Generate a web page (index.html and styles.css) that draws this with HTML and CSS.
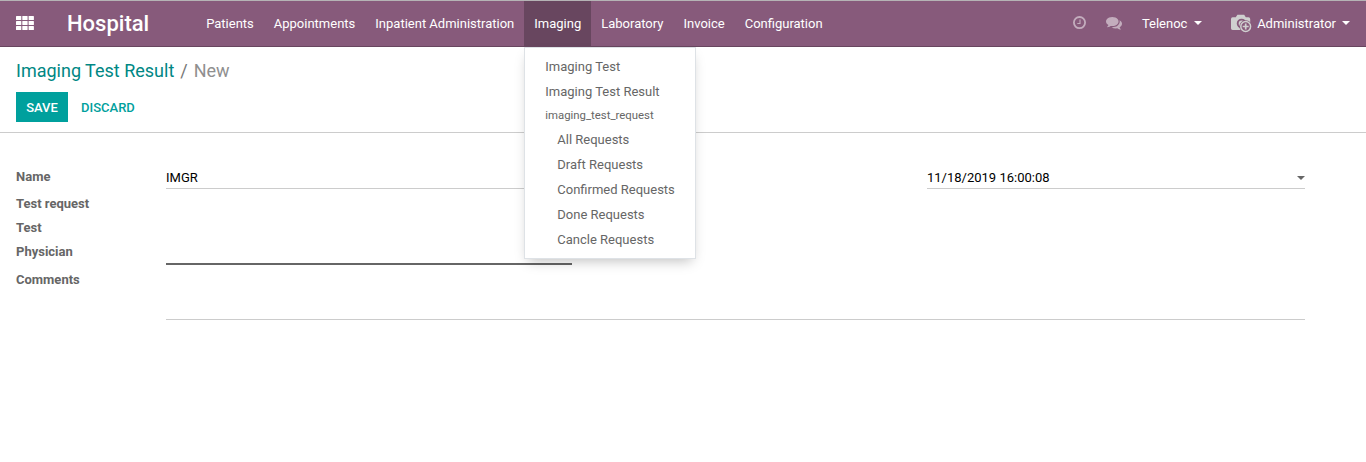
FILE: index.html
```html
<!DOCTYPE html>
<html lang="en">
<head>
<meta charset="utf-8">
<title>Imaging Test Result - Hospital</title>
<link rel="stylesheet" href="styles.css">
</head>
<body>
<header class="navbar">
  <a class="apps" aria-label="Applications">
    <svg width="18" height="14" viewBox="0 0 18 14" fill="#fff">
      <rect x="0" y="0" width="5.300" height="4" rx=".6"/><rect x="6.300" y="0" width="5.300" height="4" rx=".6"/><rect x="12.600" y="0" width="5.300" height="4" rx=".6"/>
      <rect x="0" y="5" width="5.300" height="4" rx=".6"/><rect x="6.300" y="5" width="5.300" height="4" rx=".6"/><rect x="12.600" y="5" width="5.300" height="4" rx=".6"/>
      <rect x="0" y="10" width="5.300" height="4" rx=".6"/><rect x="6.300" y="10" width="5.300" height="4" rx=".6"/><rect x="12.600" y="10" width="5.300" height="4" rx=".6"/>
    </svg>
  </a>
  <a class="brand">Hospital</a>
  <nav class="menu">
    <a class="menu-link">Patients</a>
    <a class="menu-link">Appointments</a>
    <a class="menu-link">Inpatient Administration</a>
    <div class="menu-open">
      <a class="menu-link active">Imaging</a>
      <div class="dropdown">
        <a class="item">Imaging Test</a>
        <a class="item">Imaging Test Result</a>
        <div class="group-title">imaging_test_request</div>
        <a class="item nested">All Requests</a>
        <a class="item nested">Draft Requests</a>
        <a class="item nested">Confirmed Requests</a>
        <a class="item nested">Done Requests</a>
        <a class="item nested">Cancle Requests</a>
      </div>
    </div>
    <a class="menu-link">Laboratory</a>
    <a class="menu-link">Invoice</a>
    <a class="menu-link">Configuration</a>
  </nav>
  <div class="systray">
    <svg class="clock" width="14" height="14" viewBox="0 0 14 14" fill="none" stroke="#c3adbd">
      <circle cx="6.500" cy="6.600" r="5.600" stroke-width="1.800"/><path d="M7 3.500v4H4.300" stroke-width="1.100"/>
    </svg>
    <svg class="chat" width="16" height="14" viewBox="0 0 1792 1568" fill="#c3adbd">
      <path d="M1408 640q0 139-94 257t-256.500 186.500T704 1152q-86 0-176-16-124 88-278 128-36 9-86 16h-3q-11 0-20.500-8t-11.500-21q-1-3-1-6.500t.5-6.500 2-6l2.500-5 3.500-5.500 4-5 4.500-5 4-4.500q5-6 23-25t26-29.500 22.500-29 25-38.500 20.500-44q-124-72-195-177T0 640q0-139 94-257t256.500-186.500T704 128t353.500 68.500T1314 383t94 257zm384 256q0 120-71 224.500T1526 1298q10 24 20.500 44t25 38.500 22.500 29 26 29.500 23 25q1 1 4 4.500t4.500 5 4 5 3.500 5.500l2.500 5 2 6 .5 6.500-1 6.500q-3 14-13 22t-22 7q-50-7-86-16-154-40-278-128-90 16-176 16-271 0-472-132 58 4 88 4 161 0 309-45t264-129q125-92 192-212t67-254q0-77-23-152 129 71 204 178t75 230z" transform="translate(0 -20)"/>
    </svg>
    <a class="company">Telenoc <i class="caret"></i></a>
    <a class="user">
      <svg width="22" height="19" viewBox="0 0 22 19">
        <path fill="#cfcfcf" d="M2.600 3.200h3.200L7.400.8h6.800l1.600 2.400h2.700q1.700 0 1.700 1.700V16H2.600Q1 16 1 14.300V4.900Q1 3.200 2.600 3.200Z"/>
        <circle cx="11.600" cy="9.500" r="3.900" fill="none" stroke="#875a7b" stroke-width="1.900"/>
        <circle cx="15.700" cy="12.500" r="6.300" fill="#875a7b"/>
        <circle cx="15.700" cy="12.500" r="4.900" fill="#875a7b" stroke="#cfcfcf" stroke-width="1.500"/>
        <path d="M12.700 12.500h6M15.700 9.500v6" stroke="#cfcfcf" stroke-width="1.700"/>
      </svg>
      Administrator <i class="caret"></i>
    </a>
  </div>
</header>
<section class="control-panel">
  <div class="breadcrumb"><a>Imaging Test Result</a><span class="slash">/</span><span class="current">New</span></div>
  <div class="buttons"><button class="btn primary">SAVE</button><button class="btn link">DISCARD</button></div>
</section>
<main class="form">
  <label class="l-name">Name</label>
  <div class="field name">IMGR</div>
  <div class="field date">11/18/2019 16:00:08<i class="caret dark"></i></div>
  <label class="l-request">Test request</label>
  <label class="l-test">Test</label>
  <label class="l-physician">Physician</label>
  <div class="field physician"></div>
  <label class="l-comments">Comments</label>
  <div class="field comments"></div>
</main>
</body>
</html>
```

FILE: styles.css
```css
* { box-sizing: border-box; }
body {
  margin: 0;
  background: #fff;
  color: #666;
  font: 13px/19px Roboto, sans-serif;
}
.navbar {
  display: flex;
  height: 47px;
  background: #875a7b;
  border-top: 1px solid #b5b3b5;
  border-bottom: 1px solid #68465f;
  color: #fff;
  line-height: 45px;
}
.apps { width: 67px; padding: 15px 0 0 16px; line-height: 0; }
.brand { width: 129.13px; font-size: 22px; font-weight: 500; }
.menu { display: flex; }
.menu-link { display: block; padding: 0 10px; }
.menu-open { position: relative; }
.active { background: #68465f; }
.dropdown {
  position: absolute;
  z-index: 10;
  top: 46px;
  left: 0;
  width: 172px;
  padding: 6px 0;
  background: #fff;
  border: 1px solid #dee2e6;
  box-shadow: 0 6px 12px -4px rgba(0, 0, 0, .25);
  color: #666;
}
.item { display: block; height: 25px; padding-left: 20px; line-height: 25px; white-space: nowrap; }
.nested { padding-left: 32px; }
.group-title { height: 23px; padding-left: 20px; font-size: 11.375px; line-height: 23px; }
.systray { display: flex; margin-left: auto; padding-right: 16px; }
.clock { margin: 15px 19px 0 0; }
.chat { margin: 15px 20px 0 0; }
.company { margin-right: 28.5px; }
.user { display: flex; align-items: center; }
.user svg { margin-right: 5px; }
.caret {
  display: inline-block;
  margin-left: 3px;
  border: 4px solid transparent;
  border-top-color: currentColor;
  border-bottom: 0;
  vertical-align: 3px;
}
.user .caret { margin: -1px 0 0 6px; }
.control-panel {
  height: 86px;
  padding: 10px 16px 0;
  border-bottom: 1px solid #ccc;
}
.breadcrumb { display: flex; height: 27px; font-size: 18px; line-height: 27px; }
.breadcrumb a { color: #008784; }
.slash { padding: 0 6px; color: #777; }
.current { color: #8f8f8f; }
.buttons { display: flex; margin-top: 8px; }
.btn { height: 30px; padding: 1px 0 0; border: 0; font: 500 13px/30px Roboto, sans-serif; }
.primary { width: 52px; background: #00a09d; color: #fff; }
.link { margin-left: 13px; background: none; color: #00a09d; }
.form {
  display: grid;
  grid-template-columns: 150px 406px 355px 378px;
  grid-template-rows: 27px 24px 24px 25px 56px;
  margin: 34px 0 0 16px;
}
.form label { grid-column: 1; font-weight: 700; }
.l-name { grid-row: 1; }
.l-request { grid-row: 2; }
.l-test { grid-row: 3; }
.l-physician { grid-row: 4; }
.l-comments { grid-row: 5; padding-top: 3px; }
.field { color: #000; border-bottom: 1px solid #ccc; }
.name { grid-area: 1 / 2; height: 22px; line-height: 21px; }
.date {
  display: flex;
  grid-area: 1 / 4;
  align-items: center;
  justify-content: space-between;
  height: 22px;
}
.dark { color: #666; }
.physician { grid-area: 4 / 2; height: 23px; border-bottom: 2px solid #666; }
.comments { grid-area: 5 / 2 / 6 / 5; height: 53px; }
```
